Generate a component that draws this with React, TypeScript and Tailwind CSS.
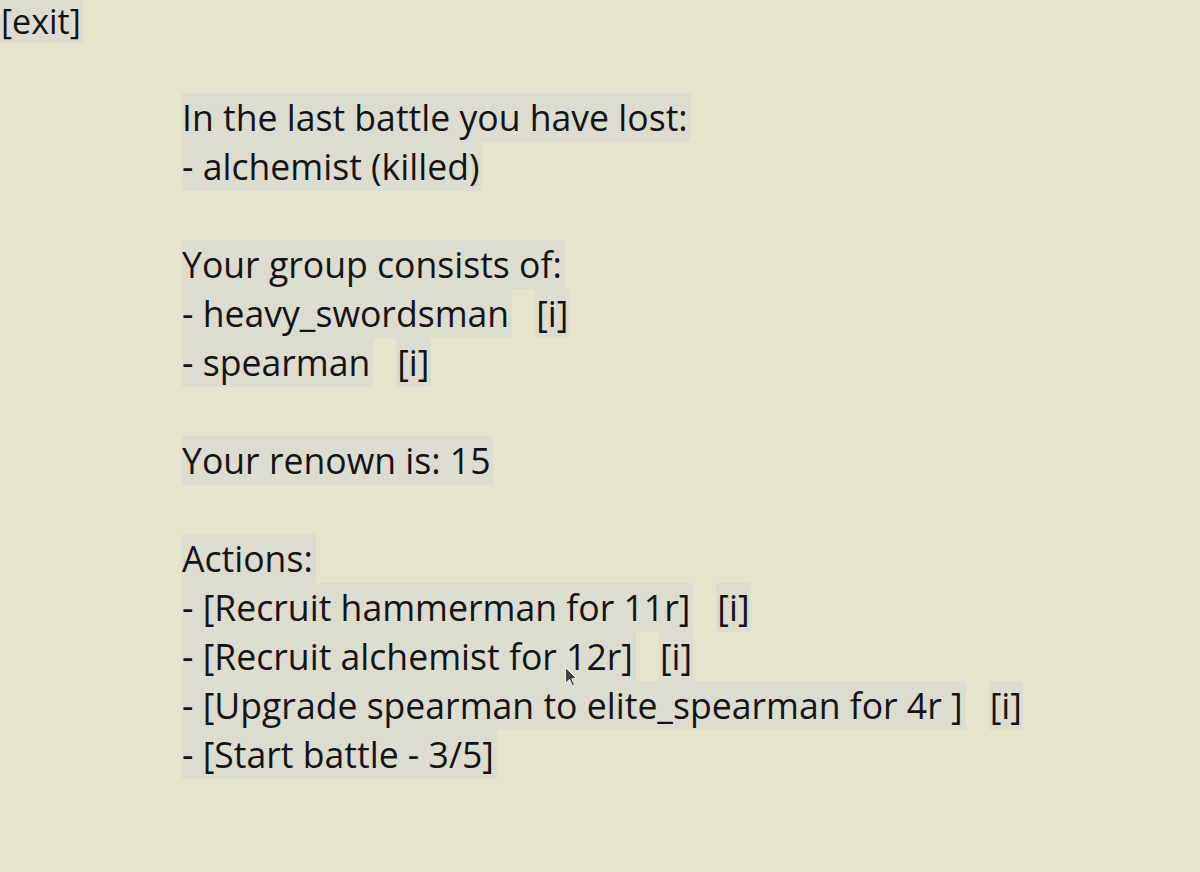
import React from "react";

type Part = { text: string; info?: boolean };

const Line = ({ text, info }: { text?: string; info?: boolean }) => {
  if (!text) return <div className="h-[49px]" />;
  return (
    <div className="flex h-[49px] items-stretch">
      <span className="bg-[#dcdccf] pr-[3px] leading-[49px] whitespace-pre">{text}</span>
      {info && (
        <span className="ml-[23px] bg-[#dcdccf] px-[1px] leading-[49px]">[i]</span>
      )}
    </div>
  );
};

const lines: (Part | null)[] = [
  { text: "In the last battle you have lost:" },
  { text: "- alchemist (killed)" },
  null,
  { text: "Your group consists of:" },
  { text: "- heavy_swordsman", info: true },
  { text: "- spearman", info: true },
  null,
  { text: "Your renown is: 15" },
  null,
  { text: "Actions:" },
  { text: "- [Recruit hammerman for 11r]", info: true },
  { text: "- [Recruit alchemist for 12r]", info: true },
  { text: "- [Upgrade spearman to elite_spearman for 4r ]", info: true },
  { text: "- [Start battle - 3/5]" },
];

export default function App() {
  return (
    <div
      className="relative h-[872px] w-[1200px] overflow-hidden bg-[#e5e4cc] text-[35.6px] text-[#141414]"
      style={{ fontFamily: '"Open Sans", "Noto Sans", sans-serif' }}
    >
      <div className="flex">
        <span className="h-[43px] bg-[#dcdccf] pl-[1px] pr-[2px] text-[34px] leading-[43px]">[exit]</span>
      </div>

      <div className="mt-[50px] flex flex-col pl-[182px]">
        {lines.map((l, i) => (
          <Line key={i} text={l?.text} info={l?.info} />
        ))}
      </div>

      {/* mouse pointer left in the capture */}
      <svg
        className="absolute left-[564px] top-[666px]"
        width="14"
        height="22"
        viewBox="0 0 14 22"
      >
        <path
          d="M1.5 1.5 L1.5 17 L5.5 13.5 L8.5 20 L10.5 19 L7.8 12.8 L12.5 12.5 Z"
          fill="#404040"
          stroke="#eeeeea"
          strokeWidth="1"
        />
      </svg>
    </div>
  );
}
